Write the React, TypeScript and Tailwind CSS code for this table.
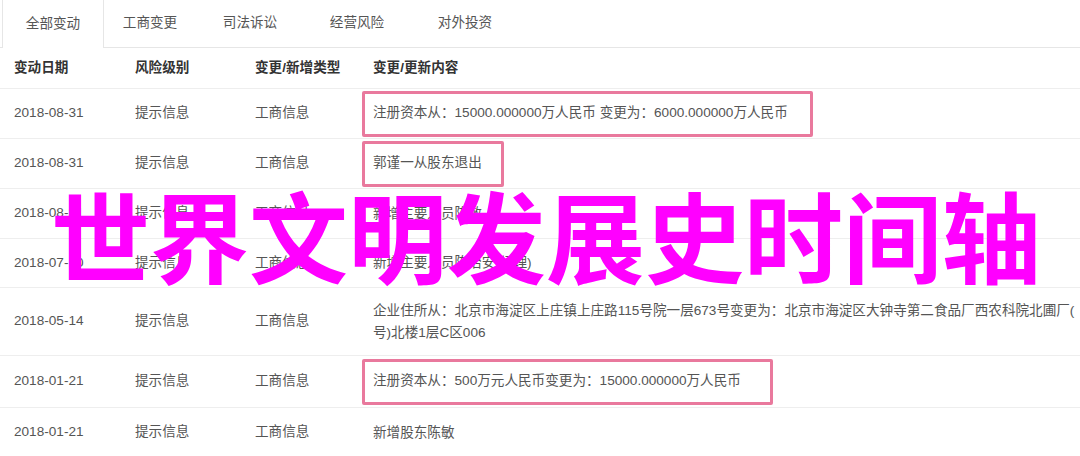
import React from 'react';

const tabs = [
    { label: '全部变动', w: 'w-[102px]' },
    { label: '工商变更', w: 'w-[92px]' },
    { label: '司法诉讼', w: 'w-[108px]' },
    { label: '经营风险', w: 'w-[106px]' },
    { label: '对外投资', w: 'w-[110px]' },
];

interface Row {
    date: string;
    content: React.ReactNode;
    boxWidth?: string;
    height: string;
}

const rows: Row[] = [
    { date: '2018-08-31', content: '注册资本从：15000.000000万人民币 变更为：6000.000000万人民币', boxWidth: 'w-[451px]', height: 'h-[50px]' },
    { date: '2018-08-31', content: '郭谨一从股东退出', boxWidth: 'w-[142px]', height: 'h-[50px]' },
    { date: '2018-08-31', content: '新增主要人员陈敏', height: 'h-[50px]' },
    { date: '2018-07-10', content: '新增主要人员陈治安(经理)', height: 'h-[49px]' },
    {
        date: '2018-05-14',
        content: (
            <>
                <div className="whitespace-nowrap">企业住所从：北京市海淀区上庄镇上庄路115号院一层673号变更为：北京市海淀区大钟寺第二食品厂西农科院北圃厂(</div>
                <div className="whitespace-nowrap">号)北楼1层C区006</div>
            </>
        ),
        height: 'h-[68px]',
    },
    { date: '2018-01-21', content: '注册资本从：500万元人民币变更为：15000.000000万人民币', boxWidth: 'w-[411px]', height: 'h-[52px]' },
    { date: '2018-01-21', content: '新增股东陈敏', height: 'h-[50px]' },
];

const App: React.FC = () => {
    return (
        <div
            className="relative w-[1080px] h-[456px] overflow-hidden bg-white text-[13.6px] text-[#555]"
            style={{ fontFamily: '"Liberation Sans", "Noto Sans CJK SC", sans-serif' }}
        >
            {/* tabs */}
            <div className="flex h-[48px] border-b border-[#e6e6e6]">
                {tabs.map((t, i) => (
                    <div
                        key={t.label}
                        className={
                            i === 0
                                ? `${t.w} ml-[2px] -mb-px flex items-center justify-center bg-white border-l border-r border-[#e6e6e6]`
                                : `${t.w} flex items-center justify-center`
                        }
                    >
                        {t.label}
                    </div>
                ))}
            </div>

            {/* header */}
            <div className="flex items-center h-[41px] font-bold text-[#333] border-b border-[#eeeeee]">
                <div className="w-[135px] pl-[14px]">变动日期</div>
                <div className="w-[120px]">风险级别</div>
                <div className="w-[118px]">变更/新增类型</div>
                <div>变更/更新内容</div>
            </div>

            {rows.map((r, i) => (
                <div key={i} className={`flex items-center border-b border-[#eeeeee] ${r.height}`}>
                    <div className="w-[135px] shrink-0 pl-[14px]">{r.date}</div>
                    <div className="w-[120px] shrink-0">提示信息</div>
                    <div className="w-[107px] shrink-0">工商信息</div>
                    {r.boxWidth ? (
                        <div className={`${r.boxWidth} shrink-0 h-[46px] flex items-center pl-[8px] border-[3px] border-[#e9799d] rounded-[2px]`}>
                            <span className="whitespace-nowrap">{r.content}</span>
                        </div>
                    ) : (
                        <div className="pl-[11px] leading-[22px]">{r.content}</div>
                    )}
                </div>
            ))}

            {/* watermark */}
            <div
                className="absolute left-[51px] top-[184px] text-[99px] leading-none font-bold text-[#ff00ff] whitespace-nowrap"
                style={{ fontFamily: '"Noto Sans CJK SC", sans-serif' }}
            >
                世界文明发展史时间轴
            </div>
        </div>
    );
};

export default App;
